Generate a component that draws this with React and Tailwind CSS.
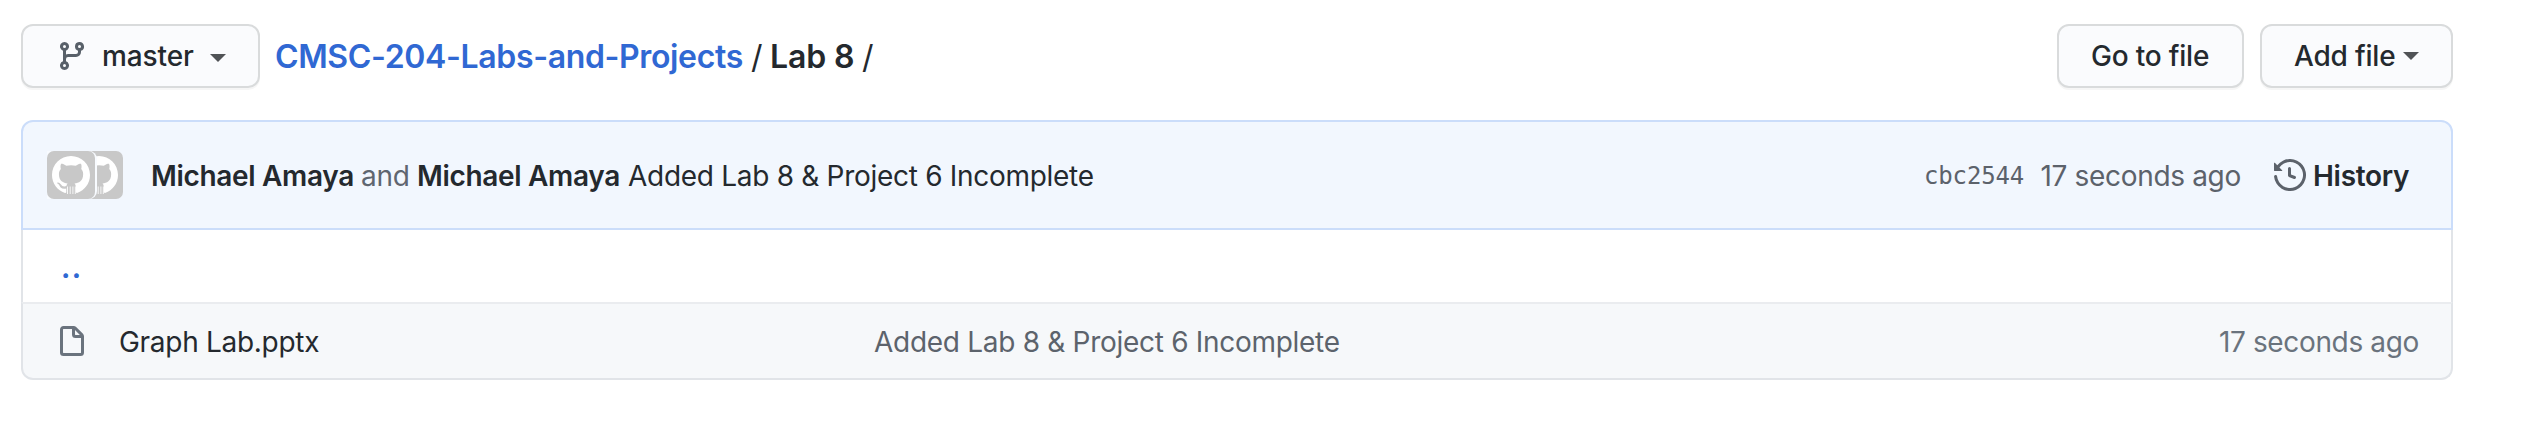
import React from "react";

const BRANCH =
  "M11.75 2.5a.75.75 0 100 1.5.75.75 0 000-1.5zm-2.25.75a2.25 2.25 0 113 2.122V6A2.5 2.5 0 0110 8.5H6a1 1 0 00-1 1v1.128a2.251 2.251 0 11-1.5 0V5.372a2.25 2.25 0 111.5 0v1.836A2.492 2.492 0 016 7h4a1 1 0 001-1v-.628A2.25 2.25 0 019.5 3.25zM4.25 12a.75.75 0 100 1.5.75.75 0 000-1.5zM3.5 3.25a.75.75 0 111.5 0 .75.75 0 01-1.5 0z";
const FILE =
  "M3.75 1.5a.25.25 0 00-.25.25v11.5c0 .138.112.25.25.25h8.5a.25.25 0 00.25-.25V6H9.75A1.75 1.75 0 018 4.25V1.5H3.75zm5.75.56v2.19c0 .138.112.25.25.25h2.19L9.5 2.06zM2 1.75C2 .784 2.784 0 3.75 0h5.086c.464 0 .909.184 1.237.513l3.414 3.414c.329.328.513.773.513 1.237v8.086A1.75 1.75 0 0112.25 15h-8.5A1.75 1.75 0 012 13.25V1.75z";
const HISTORY =
  "M1.643 3.143L.427 1.927A.25.25 0 000 2.104V5.75c0 .138.112.25.25.25h3.646a.25.25 0 00.177-.427L2.715 4.215a6.5 6.5 0 11-1.18 4.458.75.75 0 10-1.493.154 8.001 8.001 0 101.6-5.684zM7.75 4a.75.75 0 01.75.75v2.992l2.028.812a.75.75 0 01-.557 1.392l-2.5-1A.75.75 0 017 8.25v-3.5A.75.75 0 017.75 4z";
const MARK =
  "M8 0C3.58 0 0 3.58 0 8c0 3.54 2.29 6.53 5.47 7.59.4.07.55-.17.55-.38 0-.19-.01-.82-.01-1.49-2.01.37-2.53-.49-2.69-.94-.09-.23-.48-.94-.82-1.13-.28-.15-.68-.52-.01-.53.63-.01 1.08.58 1.23.82.72 1.21 1.87.87 2.33.66.07-.52.28-.87.51-1.07-1.78-.2-3.64-.89-3.64-3.95 0-.87.31-1.59.82-2.15-.08-.2-.36-1.02.08-2.12 0 0 .67-.21 2.2.82.64-.18 1.32-.27 2-.27.68 0 1.36.09 2 .27 1.53-1.04 2.2-.82 2.2-.82.44 1.1.16 1.92.08 2.12.51.56.82 1.27.82 2.15 0 3.07-1.87 3.75-3.65 3.95.29.25.54.73.54 1.48 0 1.07-.01 1.93-.01 2.2 0 .21.15.46.55.38A8.013 8.013 0 0016 8c0-4.42-3.58-8-8-8z";

function Octicon({ d, className }) {
  return (
    <svg viewBox="0 0 16 16" className={`size-8 shrink-0 fill-current ${className}`}>
      <path fillRule="evenodd" d={d} />
    </svg>
  );
}

function Caret({ className }) {
  return (
    <span
      className={`h-0 w-0 shrink-0 border-x-8 border-t-8 border-x-transparent border-t-[#505356] ${className}`}
    />
  );
}

function Avatar() {
  return (
    <svg viewBox="0 0 48 48" className="size-12 shrink-0">
      <rect width="48" height="48" rx="7" fill="#c8c8c8" />
      <path fill="#fff" transform="translate(5 5) scale(2.375)" d={MARK} />
      <path stroke="#fff" strokeOpacity="0.85" d="M20.5 35.500v7.500M23.200 35.500v7.500M25.900 35.500v7.500M28.300 35.500v7.500" />
    </svg>
  );
}

const button =
  "flex h-16 items-center rounded-xl border-2 border-[#d9dbdc] bg-[#fafbfd] text-[28px] leading-[40px] font-medium tracking-[-0.2px] shadow-[0_2px_0_rgba(27,31,35,0.04)]";

export default function App() {
  return (
    <div className="h-[428px] w-[2528px] bg-white pt-6 pr-[75px] pl-[21px] font-[Inter,sans-serif] whitespace-nowrap text-[#24292e]">
      <div className="flex h-16 items-center">
        <button className={`${button} w-[239px] pl-[33px]`}>
          <Octicon d={BRANCH} className="text-[#586069]" />
          <span className="ml-[14px] w-[108px] text-left tracking-[-0.1px]">master</span>
          <Caret className="mt-[4px]" />
        </button>
        <div className="ml-[15px] flex items-center pt-[2px] text-[32px] leading-[48px]">
          <span className="w-[476px] font-semibold tracking-[-0.36px] text-[#3068d3]">CMSC-204-Labs-and-Projects</span>
          <span className="w-[19px]">/</span>
          <span className="w-[92px] font-semibold tracking-[-0.1px]">Lab 8</span>
          <span>/</span>
        </div>
        <button className={`${button} ml-auto w-[187px] pl-[32px]`}>Go to file</button>
        <button className={`${button} ml-4 w-[193px] pl-[32px]`}>
          <span className="w-[109px] text-left">Add file</span>
          <Caret className="" />
        </button>
      </div>

      <div className="mt-8 text-[28px] leading-[42px] tracking-[-0.29px]">
        <div className="flex h-[110px] items-center rounded-t-xl border-2 border-[#cbddfa] bg-[#f2f7fe] pr-[41px] pl-6">
          <div className="flex w-[104px]">
            <div className="z-10 h-12 w-[50px] shrink-0 rounded-r-lg bg-[#f8fbff]">
              <Avatar />
            </div>
            <div className="-ml-[22px] h-12">
              <Avatar />
            </div>
          </div>
          <div className="flex pt-[2px]">
            <span className="w-[210px] font-semibold tracking-[-0.32px]">Michael Amaya</span>
            <span className="w-[56px] text-[#5f6670]">and</span>
            <span className="w-[211px] font-semibold tracking-[-0.32px]">Michael Amaya</span>
            <span>Added Lab 8 &amp; Project 6 Incomplete</span>
          </div>
          <span className="ml-auto w-[116.500px] pt-[2px] font-['DejaVu_Sans_Mono',monospace] text-[24px] tracking-[-0.15px] text-[#5c626b]">cbc2544</span>
          <span className="w-[233.500px] pt-[2px] tracking-[-0.33px] text-[#5c626b]">17 seconds ago</span>
          <Octicon d={HISTORY} className="text-[#5c626b]" />
          <span className="ml-[7px] w-[97px] pt-[2px] font-semibold">History</span>
        </div>
        <div className="flex h-[72px] items-center border-x-2 border-[#e1e4e8] pt-1 pl-[38px]">
          <span className="font-bold tracking-[1.5px] text-[#3068d3]">..</span>
        </div>
        <div className="flex h-[78px] items-center rounded-b-xl border-2 border-t-[#eaecef] border-[#e1e4e8] bg-[#f6f8fa] pr-8 pl-[33px]">
          <Octicon d={FILE} className="mt-px text-[#6a737d]" />
          <span className="ml-[31px] w-[755px] pt-[2px]">Graph Lab.pptx</span>
          <span className="pt-[2px] text-[#5c636c]">Added Lab 8 &amp; Project 6 Incomplete</span>
          <span className="ml-auto pt-[2px] tracking-[-0.35px] text-[#6a737d]">17 seconds ago</span>
        </div>
      </div>
    </div>
  );
}
